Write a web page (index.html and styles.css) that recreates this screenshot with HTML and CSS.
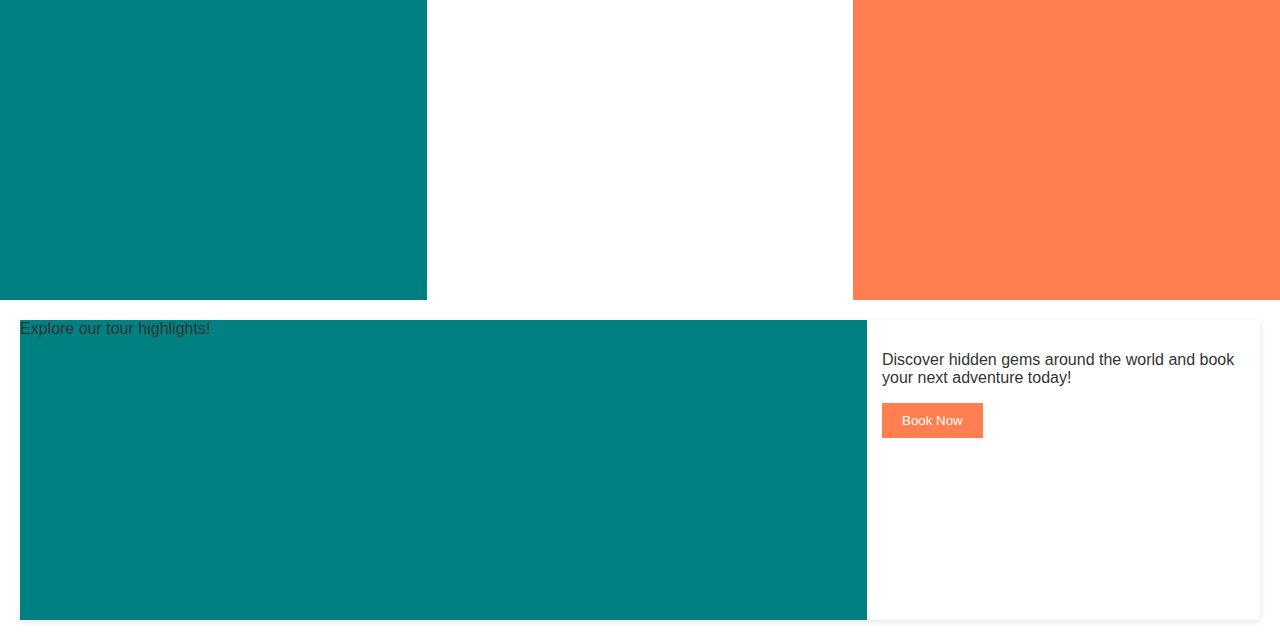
FILE: index.html
```html
<!DOCTYPE html>
<html>
<head>
<meta charset="utf-8">
<link rel="stylesheet" href="styles.css">
</head>
<body>
<div class="hero">
  <div class="block teal"></div>
  <div class="block white"></div>
  <div class="block coral"></div>
</div>
<section class="card">
  <div class="media">Explore our tour highlights!</div>
  <div class="info">
    <p>Discover hidden gems around the world and book your next adventure today!</p>
    <button class="btn">Book Now</button>
  </div>
</section>
</body>
</html>
```
FILE: styles.css
```css
html, body {
  margin: 0;
  padding: 0;
  background: #fff;
  font-family: "Liberation Sans", Arial, sans-serif;
  color: #333;
}
.hero {
  display: flex;
  height: 300px;
}
.block {
  flex: 1 1 0;
}
.teal { background: #008080; }
.white { background: #fff; }
.coral { background: #ff7f50; }
.card {
  display: flex;
  margin: 20px;
  height: 300px;
  background: #fff;
  box-shadow: 0 2px 6px rgba(0, 0, 0, 0.1);
}
.media {
  flex: 0 0 847px;
  background: #008080;
  font-size: 16px;
  line-height: 18px;
}
.info {
  flex: 1 1 0;
  padding: 15px;
}
.info p {
  margin: 16px 0;
  font-size: 16px;
}
.btn {
  background: #ff7f50;
  color: #fff;
  border: none;
  padding: 10px 20px;
  font-family: "Liberation Sans", Arial, sans-serif;
  font-size: 13.333px;
}
```
